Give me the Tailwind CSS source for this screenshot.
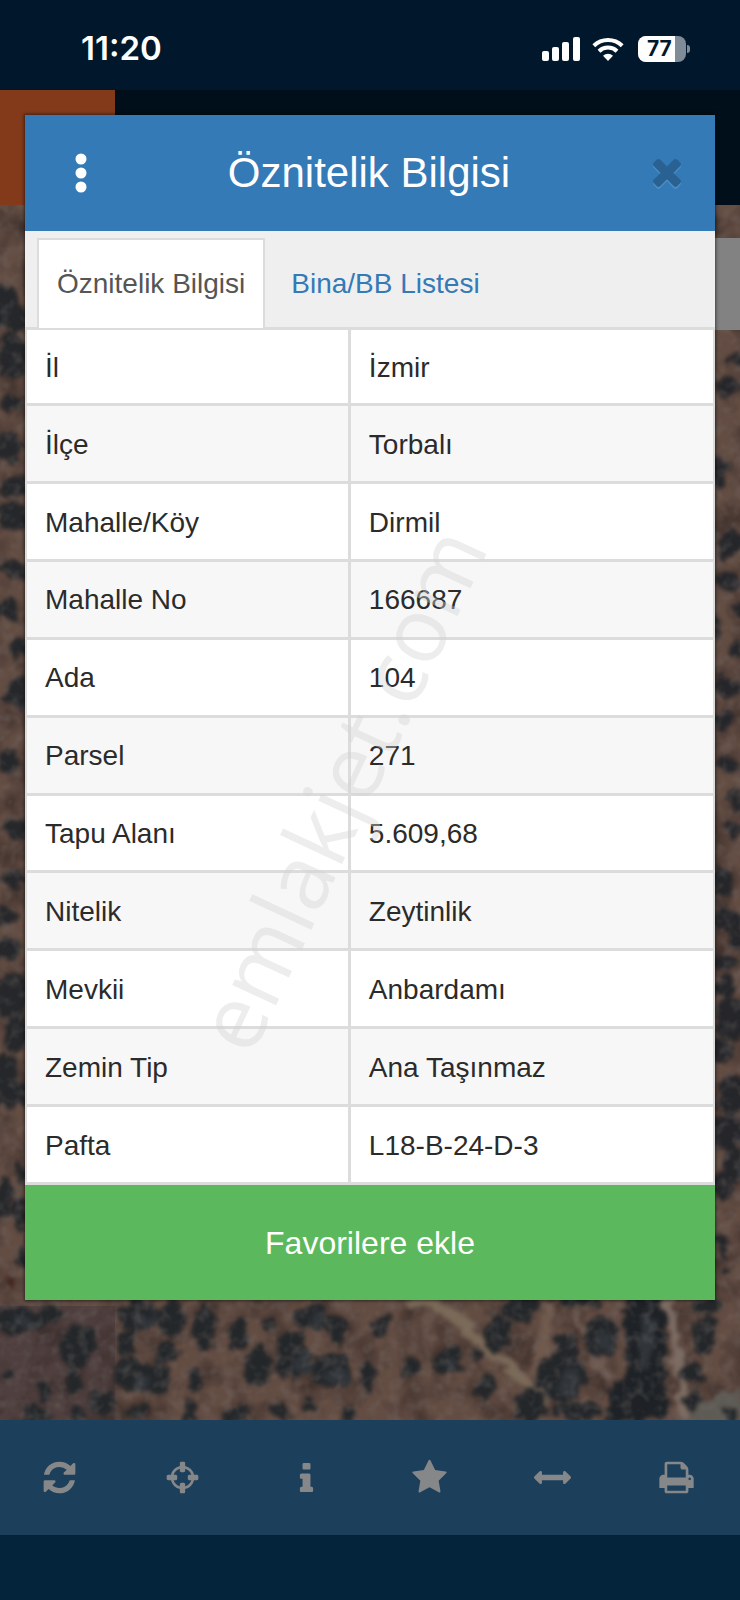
<!DOCTYPE html>
<html lang="tr">
<head>
    <meta charset="UTF-8">
    <meta name="viewport" content="width=device-width, initial-scale=1.0">
    <title>Öznitelik Bilgisi</title>
    <script src="https://cdn.jsdelivr.net/npm/@tailwindcss/browser@4"></script>
</head>
<body class="relative min-h-screen flex flex-col overflow-x-hidden bg-[#03243b] font-['Liberation_Sans',Arial,sans-serif] text-[#2b2b2b]">
    <!-- Status bar -->
    <div class="h-[90px] bg-[#01182c] flex items-center justify-between pt-2 pl-[81px] pr-[50px]">
        <span class="font-['Inter',sans-serif] font-semibold text-[33px] text-white">11:20</span>
        <div class="flex items-center gap-3">
            <svg class="w-[38px] h-6" viewBox="0 0 38 24" fill="#fff">
                <rect x="0" y="14" width="7" height="10" rx="2"/>
                <rect x="10" y="10" width="7" height="14" rx="2"/>
                <rect x="20" y="5" width="7" height="19" rx="2"/>
                <rect x="31" y="0" width="7" height="24" rx="2"/>
            </svg>
            <svg class="w-8 h-6" viewBox="0 0 32 24" fill="none" stroke="#fff" stroke-width="4">
                <path d="M1.8 8.7a20.5 20.5 0 0 1 28.4 0"/>
                <path d="M7 14.2a13 13 0 0 1 18 0"/>
                <path d="M16 24l-5-5.3a7.4 7.4 0 0 1 10 0z" fill="#fff" stroke="none"/>
            </svg>
            <div class="flex items-center gap-px ml-0.5">
                <div class="w-12 h-[26px] rounded-lg overflow-hidden bg-[#7f8b96] flex">
                    <span class="w-[37px] bg-white pl-[9px] font-['Inter',sans-serif] font-bold text-[21px] leading-[26px] text-[#01182c]">77</span>
                </div>
                <div class="w-[3px] h-2 rounded-r-full bg-[#7f8b96]"></div>
            </div>
        </div>
    </div>

    <!-- App header -->
    <div class="h-[115px] bg-[#000f1a] flex">
        <div class="w-[115px] bg-[#823a1b]"></div>
    </div>

    <!-- Map -->
    <div class="relative flex-1 min-h-[1215px] overflow-hidden bg-[#5f4d43]">
        <svg class="absolute inset-0 w-full h-full" viewBox="0 205 740 1215" preserveAspectRatio="xMidYMax slice">
            <defs>
                <filter id="rough" x="-5%" y="-5%" width="110%" height="110%" color-interpolation-filters="sRGB">
                    <feTurbulence type="fractalNoise" baseFrequency="0.07" numOctaves="3" seed="4" result="n"/>
                    <feDisplacementMap in="SourceGraphic" in2="n" scale="20" xChannelSelector="R" yChannelSelector="G"/>
                    <feGaussianBlur stdDeviation="2"/>
                </filter>
                <filter id="soil" x="0" y="0" width="100%" height="100%" color-interpolation-filters="sRGB">
                    <feTurbulence type="fractalNoise" baseFrequency="0.03" numOctaves="3" seed="9"/>
                    <feColorMatrix values="0 0 0 0 0.2  0 0 0 0 0.15  0 0 0 0 0.14  1.6 0 0 0 -0.65"/>
                </filter>
                <filter id="speckle" x="0" y="0" width="100%" height="100%" color-interpolation-filters="sRGB">
                    <feTurbulence type="fractalNoise" baseFrequency="0.09" numOctaves="2" seed="2"/>
                    <feColorMatrix values="0 0 0 0 0.46  0 0 0 0 0.43  0 0 0 0 0.42  0.8 0 0 0 -0.36"/>
                </filter>
            </defs>
            <rect x="0" y="205" width="740" height="1215" fill="#67513f"/>
            <rect x="0" y="205" width="740" height="1215" fill="#5a464c" fill-opacity="0.3"/>
            <rect x="0" y="1306" width="115" height="114" fill="#4a3c3d" fill-opacity="0.8"/>
            <rect x="0" y="205" width="740" height="1215" filter="url(#soil)"/>
            <g filter="url(#rough)">
                <!-- Tracks -->
                <path d="M405 1296q35 4 60 30t35 34 50 42" fill="none" stroke="#7b6a58" stroke-width="11"/>
                <path d="M548 1300q0 45-14 75" fill="none" stroke="#70594d" stroke-width="10"/>
                <path d="M668 1296q14 60 16 124" fill="none" stroke="#7d6c62" stroke-width="11"/>
                <path d="M575 1300q10 45 35 80" fill="none" stroke="#6e5b52" stroke-width="7"/>
                <path d="M740 1388l-50 18v20h50z" fill="#5e5a54"/>
                <!-- Trees under the dialog -->
                <g fill="#24272a">
                    <ellipse cx="20" cy="1320" rx="26" ry="13"/><ellipse cx="54" cy="1312" rx="12" ry="9"/>
                    <ellipse cx="78" cy="1345" rx="18" ry="22"/><ellipse cx="74" cy="1380" rx="9" ry="15"/>
                    <ellipse cx="42" cy="1392" rx="6" ry="11"/><ellipse cx="36" cy="1415" rx="16" ry="7"/>
                    <ellipse cx="102" cy="1402" rx="12" ry="12"/><ellipse cx="134" cy="1412" rx="12" ry="9"/>
                    <ellipse cx="10" cy="1372" rx="5" ry="7"/><ellipse cx="78" cy="1415" rx="8" ry="7"/>
                    <ellipse cx="138" cy="1316" rx="20" ry="16"/><ellipse cx="172" cy="1318" rx="14" ry="18"/>
                    <ellipse cx="126" cy="1342" rx="8" ry="12"/><ellipse cx="130" cy="1374" rx="16" ry="18"/>
                    <ellipse cx="154" cy="1378" rx="15" ry="15"/><ellipse cx="167" cy="1352" rx="11" ry="12"/>
                    <ellipse cx="205" cy="1328" rx="10" ry="27"/><ellipse cx="238" cy="1334" rx="9" ry="15"/>
                    <ellipse cx="197" cy="1380" rx="9" ry="12"/><ellipse cx="190" cy="1410" rx="7" ry="11"/>
                    <ellipse cx="258" cy="1365" rx="13" ry="20"/><ellipse cx="268" cy="1325" rx="9" ry="7"/>
                    <ellipse cx="292" cy="1356" rx="17" ry="23"/><ellipse cx="332" cy="1370" rx="22" ry="19"/>
                    <ellipse cx="309" cy="1317" rx="15" ry="14"/><ellipse cx="336" cy="1330" rx="12" ry="16"/>
                    <ellipse cx="280" cy="1411" rx="7" ry="11"/><ellipse cx="236" cy="1414" rx="15" ry="7"/>
                    <ellipse cx="308" cy="1404" rx="7" ry="6"/><ellipse cx="349" cy="1411" rx="7" ry="9"/>
                    <ellipse cx="366" cy="1378" rx="8" ry="20"/><ellipse cx="380" cy="1325" rx="10" ry="10"/>
                    <ellipse cx="412" cy="1367" rx="8" ry="9"/><ellipse cx="446" cy="1362" rx="14" ry="15"/>
                    <ellipse cx="498" cy="1333" rx="15" ry="17"/><ellipse cx="520" cy="1307" rx="18" ry="13"/>
                    <ellipse cx="485" cy="1388" rx="9" ry="13"/><ellipse cx="478" cy="1358" rx="5" ry="8"/>
                    <ellipse cx="530" cy="1406" rx="18" ry="15"/><ellipse cx="562" cy="1376" rx="24" ry="28"/>
                    <ellipse cx="565" cy="1348" rx="11" ry="15"/>
                    <ellipse cx="602" cy="1337" rx="17" ry="20"/><ellipse cx="578" cy="1412" rx="24" ry="9"/>
                    <ellipse cx="580" cy="1300" rx="18" ry="8"/><ellipse cx="704" cy="1335" rx="12" ry="20"/>
                    <ellipse cx="690" cy="1373" rx="13" ry="9"/><ellipse cx="692" cy="1400" rx="9" ry="10"/>
                    <ellipse cx="708" cy="1306" rx="15" ry="8"/><ellipse cx="730" cy="1415" rx="7" ry="6"/>
                </g>
                <path d="M626 1296h38l4 124h-62v-32l18-8z" fill="#1e2226"/>
                <g fill="#30353a">
                    <ellipse cx="304" cy="1364" rx="9" ry="12"/><ellipse cx="340" cy="1376" rx="11" ry="10"/>
                    <ellipse cx="142" cy="1382" rx="9" ry="8"/><ellipse cx="570" cy="1380" rx="11" ry="14"/>
                    <ellipse cx="647" cy="1340" rx="8" ry="28"/><ellipse cx="450" cy="1364" rx="6" ry="8"/>
                    <ellipse cx="318" cy="1322" rx="8" ry="7"/><ellipse cx="148" cy="1320" rx="9" ry="8"/>
                    <ellipse cx="604" cy="1340" rx="8" ry="10"/><ellipse cx="28" cy="1322" rx="12" ry="6"/>
                </g>
                <!-- Trees left of the dialog -->
                <g fill="#25272a">
                    <ellipse cx="5" cy="305" rx="12" ry="24"/><ellipse cx="18" cy="320" rx="12" ry="16"/>
                    <ellipse cx="12" cy="356" rx="16" ry="24"/>
                    <ellipse cx="14" cy="401" rx="13" ry="9"/><ellipse cx="7" cy="448" rx="13" ry="16"/>
                    <ellipse cx="16" cy="487" rx="14" ry="9"/><ellipse cx="14" cy="516" rx="15" ry="16"/>
                    <ellipse cx="16" cy="570" rx="17" ry="8"/><ellipse cx="8" cy="609" rx="12" ry="12"/>
                    <ellipse cx="18" cy="648" rx="12" ry="10"/><ellipse cx="16" cy="694" rx="14" ry="16"/>
                    <ellipse cx="8" cy="762" rx="12" ry="12"/><ellipse cx="16" cy="830" rx="15" ry="9"/>
                    <ellipse cx="14" cy="879" rx="14" ry="10"/><ellipse cx="8" cy="918" rx="12" ry="9"/>
                    <ellipse cx="7" cy="950" rx="13" ry="12"/><ellipse cx="12" cy="998" rx="19" ry="22"/>
                    <ellipse cx="18" cy="1034" rx="15" ry="15"/><ellipse cx="6" cy="1072" rx="12" ry="20"/>
                    <ellipse cx="18" cy="1092" rx="11" ry="10"/><ellipse cx="4" cy="1102" rx="8" ry="12"/>
                    <ellipse cx="22" cy="1172" rx="6" ry="11"/><ellipse cx="4" cy="1200" rx="8" ry="20"/>
                    <ellipse cx="20" cy="1214" rx="9" ry="16"/><ellipse cx="22" cy="1256" rx="5" ry="8"/>
                    <ellipse cx="9" cy="1284" rx="5" ry="5" fill="#41231c"/>
                </g>
                <!-- Trees right of the dialog -->
                <g fill="#25262a">
                    <ellipse cx="736" cy="358" rx="8" ry="9"/><ellipse cx="728" cy="388" rx="13" ry="9"/>
                    <ellipse cx="718" cy="470" rx="9" ry="18"/><ellipse cx="732" cy="544" rx="13" ry="14"/>
                    <ellipse cx="726" cy="581" rx="14" ry="9"/><ellipse cx="738" cy="610" rx="8" ry="8"/>
                    <ellipse cx="717" cy="628" rx="7" ry="12"/><ellipse cx="736" cy="651" rx="8" ry="9"/>
                    <ellipse cx="728" cy="687" rx="13" ry="13"/><ellipse cx="724" cy="720" rx="10" ry="8"/>
                    <ellipse cx="731" cy="766" rx="11" ry="8"/><ellipse cx="736" cy="800" rx="9" ry="12"/>
                    <ellipse cx="735" cy="830" rx="10" ry="10"/><ellipse cx="722" cy="882" rx="12" ry="15"/>
                    <ellipse cx="726" cy="921" rx="14" ry="12"/><ellipse cx="738" cy="938" rx="9" ry="9"/>
                    <ellipse cx="724" cy="962" rx="13" ry="8"/><ellipse cx="722" cy="988" rx="14" ry="12"/>
                    <ellipse cx="732" cy="1018" rx="17" ry="20"/><ellipse cx="720" cy="1050" rx="12" ry="13"/>
                    <ellipse cx="732" cy="1094" rx="16" ry="20"/><ellipse cx="728" cy="1132" rx="18" ry="18"/>
                    <ellipse cx="734" cy="1166" rx="12" ry="18"/><ellipse cx="722" cy="1186" rx="10" ry="12"/>
                    <ellipse cx="722" cy="1246" rx="7" ry="12"/><ellipse cx="724" cy="1271" rx="6" ry="5"/>
                </g>
            </g>
            <rect x="0" y="205" width="740" height="1215" filter="url(#speckle)"/>
        </svg>
        <div class="absolute right-0 top-[33px] w-8 h-[92px] bg-[#828282]"></div>
    </div>

    <!-- Toolbar -->
    <nav class="h-[115px] bg-[#1c3f5c] grid grid-cols-6 text-[#868789]">
        <button type="button" aria-label="Yenile" class="flex items-center justify-center pr-1">
            <svg class="size-[37px]" viewBox="0 0 1792 1792" fill="currentColor"><path d="M1639 1056q0 5-1 7-64 268-268 434.5t-478 166.5q-146 0-282.5-55t-243.5-157l-129 129q-19 19-45 19t-45-19-19-45v-448q0-26 19-45t45-19h448q26 0 45 19t19 45-19 45l-137 137q71 66 161 102t187 36q134 0 250-65t186-179q11-17 53-117 8-23 30-23h192q13 0 22.500 9.500t9.500 22.500zm25-800v448q0 26-19 45t-45 19h-448q-26 0-45-19t-19-45 19-45l138-138q-148-137-349-137-134 0-250 65t-186 179q-11 17-53 117-8 23-30 23h-199q-13 0-22.500-9.500t-9.500-22.500v-7q65-268 270-434.500t480-166.500q146 0 284 55.500t245 156.500l130-129q19-19 45-19t45 19 19 45z"/></svg>
        </button>
        <button type="button" aria-label="Konum" class="flex items-center justify-center pr-1">
            <svg class="size-[37px]" viewBox="0 0 1792 1792" fill="currentColor"><path d="M1325 1024h-109q-26 0-45-19t-19-45v-128q0-26 19-45t45-19h109q-32-108-112.500-188.500t-188.500-112.500v109q0 26-19 45t-45 19h-128q-26 0-45-19t-19-45v-109q-108 32-188.500 112.500t-112.500 188.500h109q26 0 45 19t19 45v128q0 26-19 45t-45 19h-109q32 108 112.500 188.500t188.500 112.500v-109q0-26 19-45t45-19h128q26 0 45 19t19 45v109q108-32 188.500-112.500t112.500-188.500zm339-192v128q0 26-19 45t-45 19h-143q-37 161-154.500 278.500t-278.500 154.500v143q0 26-19 45t-45 19h-128q-26 0-45-19t-19-45v-143q-161-37-278.500-154.500t-154.500-278.500h-143q-26 0-45-19t-19-45v-128q0-26 19-45t45-19h143q37-161 154.500-278.500t278.500-154.500v-143q0-26 19-45t45-19h128q26 0 45 19t19 45v143q161 37 278.500 154.500t154.500 278.500h143q26 0 45 19t19 45z"/></svg>
        </button>
        <button type="button" aria-label="Bilgi" class="flex items-center justify-center pr-1">
            <svg class="size-[37px]" viewBox="0 0 1792 1792" fill="currentColor"><path d="M1216 1408v128q0 26-19 45t-45 19h-512q-26 0-45-19t-19-45v-128q0-26 19-45t45-19h64v-384h-64q-26 0-45-19t-19-45v-128q0-26 19-45t45-19h384q26 0 45 19t19 45v576h64q26 0 45 19t19 45zm-128-1152v192q0 26-19 45t-45 19h-256q-26 0-45-19t-19-45v-192q0-26 19-45t45-19h256q26 0 45 19t19 45z"/></svg>
        </button>
        <button type="button" aria-label="Favoriler" class="flex items-center justify-center pr-1">
            <svg class="size-[37px]" viewBox="0 0 1792 1792" fill="currentColor"><path d="M1728 647q0 22-26 48l-363 354 86 500q1 7 1 20 0 21-10.500 35.500t-30.500 14.500q-19 0-40-12l-449-236-449 236q-22 12-40 12-21 0-31.500-14.500t-10.500-35.500q0-6 2-20l86-500-364-354q-25-27-25-48 0-37 56-46l502-73 225-455q19-41 49-41t49 41l225 455 502 73q56 9 56 46z"/></svg>
        </button>
        <button type="button" aria-label="Ölçüm" class="flex items-center justify-center pr-1">
            <svg class="size-[37px]" viewBox="0 0 1792 1792" fill="currentColor"><path d="M1792 896q0 26-19 45l-256 256q-19 19-45 19t-45-19-19-45v-128h-1024v128q0 26-19 45t-45 19-45-19l-256-256q-19-19-19-45t19-45l256-256q19-19 45-19t45 19 19 45v128h1024v-128q0-26 19-45t45-19 45 19l256 256q19 19 19 45z"/></svg>
        </button>
        <button type="button" aria-label="Yazdır" class="flex items-center justify-center pr-1">
            <svg class="size-[37px]" viewBox="0 0 1792 1792" fill="currentColor"><path d="M448 1536h896v-256h-896v256zm0-640h896v-384h-160q-40 0-68-28t-28-68v-160h-640v640zm1152 64q0-26-19-45t-45-19-45 19-19 45 19 45 45 19 45-19 19-45zm128 0v416q0 13-9.500 22.500t-22.500 9.500h-224v160q0 40-28 68t-68 28h-960q-40 0-68-28t-28-68v-160h-224q-13 0-22.500-9.500t-9.500-22.500v-416q0-79 56.500-135.500t135.500-56.500h64v-544q0-40 28-68t68-28h672q40 0 88 20t76 48l152 152q28 28 48 76t20 88v256h64q79 0 135.500 56.500t56.500 135.500z"/></svg>
        </button>
    </nav>
    <div class="h-[65px] bg-[#03243b]"></div>

    <!-- Dialog -->
    <div role="dialog" aria-labelledby="dialogTitle" class="absolute inset-x-[25px] top-[115px] bg-[#efefef] shadow-[0_0_3px_1px_rgba(0,0,0,0.5)]">
        <div class="h-[116px] bg-[#337ab7] flex items-center justify-between pl-8 pr-[34px]">
            <button type="button" aria-label="Menü" class="w-12 flex justify-center">
                <svg class="w-3 h-10" viewBox="0 0 12 40" fill="#fff"><circle cx="6" cy="6" r="5.500"/><circle cx="6" cy="20" r="5.500"/><circle cx="6" cy="34" r="5.500"/></svg>
            </button>
            <h1 id="dialogTitle" class="text-[42px] leading-[48px] text-white">Öznitelik Bilgisi</h1>
            <button type="button" aria-label="Kapat" class="w-12 flex justify-end">
                <svg class="w-7 h-8" viewBox="302 302 1188 1324"><path fill="#4d8ec4" transform="translate(0 80)" d="M1490 1322q0 40-28 68l-136 136q-28 28-68 28t-68-28l-294-294-294 294q-28 28-68 28t-68-28l-136-136q-28-28-28-68t28-68l294-294-294-294q-28-28-28-68t28-68l136-136q28-28 68-28t68 28l294 294 294-294q28-28 68-28t68 28l136 136q28 28 28 68t-28 68l-294 294 294 294q28 28 28 68z"/><path fill="#296292" d="M1490 1322q0 40-28 68l-136 136q-28 28-68 28t-68-28l-294-294-294 294q-28 28-68 28t-68-28l-136-136q-28-28-28-68t28-68l294-294-294-294q-28-28-28-68t28-68l136-136q28-28 68-28t68 28l294 294 294-294q28-28 68-28t68 28l136 136q28 28 28 68t-28 68l-294 294 294 294q28 28 28 68z"/></svg>
            </button>
        </div>

        <!-- Tabs -->
        <div class="h-[99px] pt-[7px] pl-3 flex border-b-3 border-[#dcdcdc] text-[28px]">
            <a href="#bilgi" class="-mb-px px-[18px] border-2 border-b-0 border-[#dcdcdc] bg-white flex items-center text-[#555]">Öznitelik Bilgisi</a>
            <a href="#liste" class="-mb-px px-6 border-2 border-b-0 border-transparent flex items-center text-[#337ab7]">Bina/BB Listesi</a>
        </div>

        <!-- Attributes -->
        <table class="w-full h-[855px] table-fixed border-collapse bg-white text-[28px] leading-8 text-left">
            <colgroup>
                <col class="w-[47%]">
                <col>
            </colgroup>
            <tbody class="[&_th]:font-normal [&_th]:pl-[18px] [&_td]:pl-[18px] [&_th]:pt-0.5 [&_td]:pt-0.5 [&_th]:border-r-3 [&_th]:border-[#dcdcdc] [&_tr]:border-b-3 [&_tr]:border-x-2 [&_tr]:border-[#dcdcdc] [&_tr:nth-child(even)]:bg-[#f7f7f7]">
                <tr><th scope="row">İl</th><td>İzmir</td></tr>
                <tr><th scope="row">İlçe</th><td>Torbalı</td></tr>
                <tr><th scope="row">Mahalle/Köy</th><td>Dirmil</td></tr>
                <tr><th scope="row">Mahalle No</th><td>166687</td></tr>
                <tr><th scope="row">Ada</th><td>104</td></tr>
                <tr><th scope="row">Parsel</th><td>271</td></tr>
                <tr><th scope="row">Tapu Alanı</th><td>5.609,68</td></tr>
                <tr><th scope="row">Nitelik</th><td>Zeytinlik</td></tr>
                <tr><th scope="row">Mevkii</th><td>Anbardamı</td></tr>
                <tr><th scope="row">Zemin Tip</th><td>Ana Taşınmaz</td></tr>
                <tr><th scope="row">Pafta</th><td>L18-B-24-D-3</td></tr>
            </tbody>
        </table>

        <button type="button" class="block w-full h-[115px] bg-[#5cb85c] text-[32px] text-white">Favorilere ekle</button>
    </div>

    <!-- Watermark -->
    <div aria-hidden="true" class="absolute inset-x-0 top-0 h-[1576px] flex items-center justify-center pr-[62px] pointer-events-none">
        <span class="-rotate-65 font-['Open_Sans',sans-serif] text-[90px] leading-none text-[#d2d2d2]/40">emlakjet.com</span>
    </div>
</body>
</html>
